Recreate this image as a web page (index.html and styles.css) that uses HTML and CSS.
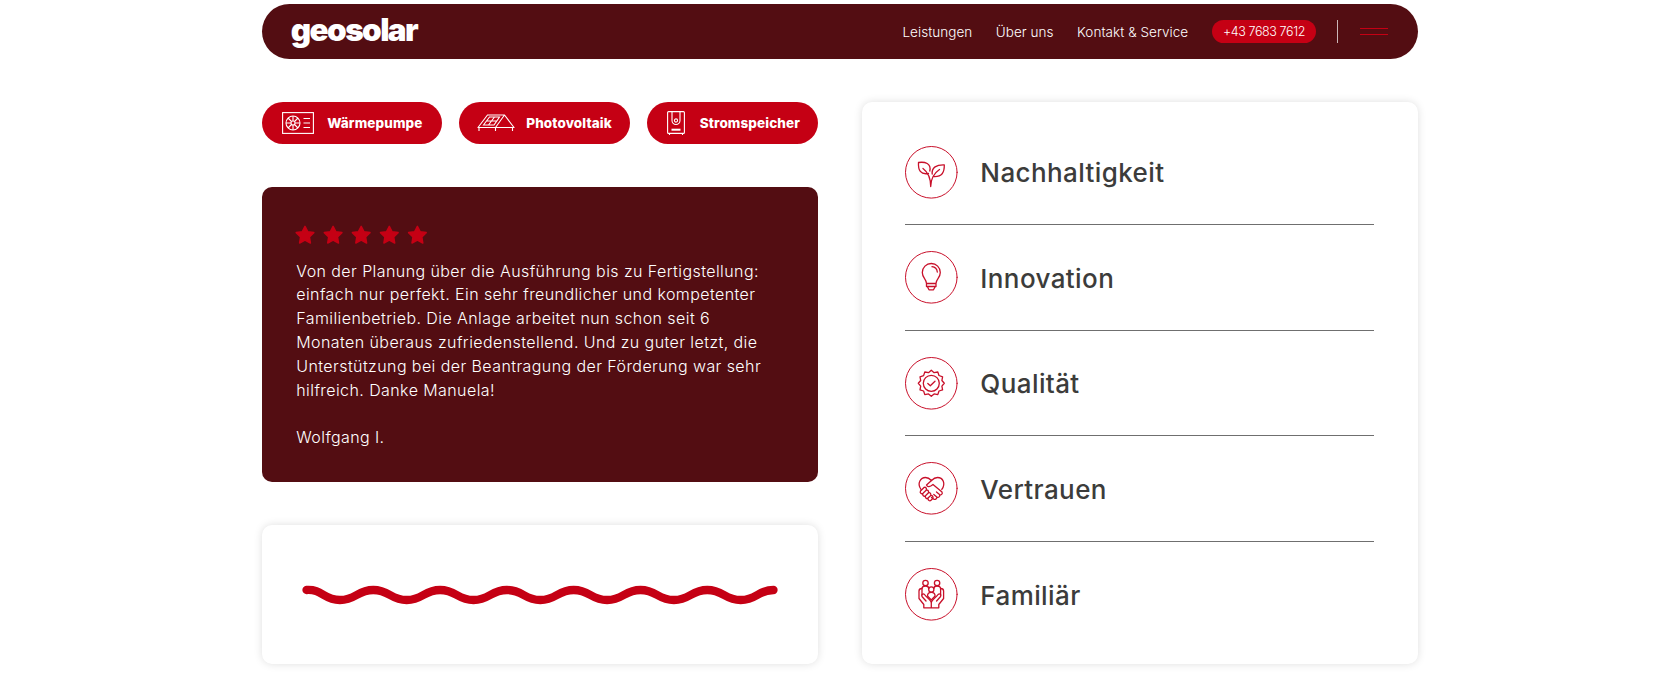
FILE: index.html
```
<!DOCTYPE html>
<html lang="de">
<head>
    <meta charset="UTF-8">
    <meta name="viewport" content="width=device-width, initial-scale=1.0">
    <title>geosolar</title>
    <link rel="stylesheet" href="styles.css">
</head>
<body>
    <div class="page">
    <header class="header">
        <a href="#" class="logo">geosolar</a>
        <nav class="nav">
            <a href="#">Leistungen</a>
            <a href="#">Über uns</a>
            <a href="#">Kontakt &amp; Service</a>
        </nav>
        <a href="#" class="phone">+43 7683 7612</a>
        <span class="divider"></span>
        <div class="burger"><span></span><span></span></div>
    </header>

    <main class="grid">
        <div class="col-left">
            <div class="pills">
                <a href="#" class="pill pill-pumpe">
                    <svg width="32" height="22" viewBox="0 0 32 22">
                        <rect x=".6" y=".6" width="30.8" height="20.8"/>
                        <circle cx="11" cy="11" r="7"/>
                        <circle cx="11" cy="11" r="2"/>
                        <path d="M11 4v5M11 13v5M4 11h5M13 11h5M6 6l3.5 3.5M12.5 12.5L16 16M16 6l-3.5 3.5M9.5 12.5L6 16M21.5 6.5H28M21.5 11H28M21.5 15.5H28"/>
                    </svg>
                    <span>Wärmepumpe</span>
                </a>
                <a href="#" class="pill pill-pv">
                    <svg width="38" height="18" viewBox="0 0 38 18">
                        <path d="M1 13.5L10.5 1H27.5L37 13.5M27.5 1L18.5 13.5M.5 13.5H37.5M2 13.5V17M18.5 13.5V17M35.5 13.5V17"/>
                        <path d="M6.5 11L12.500 3H22.5L17 11ZM9.5 7H19.5M17.5 3L11.5 11"/>
                    </svg>
                    <span>Photovoltaik</span>
                </a>
                <a href="#" class="pill pill-speicher">
                    <svg width="18" height="24" viewBox="0 0 18 24">
                        <rect x=".6" y=".6" width="16.8" height="21.8" rx="1"/>
                        <path d="M5 .6V9.5A4 4 0 0 0 13 9.5V.6M2.5 22.5V24M15.5 22.5V24"/>
                        <circle cx="9" cy="9.5" r="1.6"/>
                        <path d="M4.5 18.7H13.5" stroke-width="2"/>
                    </svg>
                    <span>Stromspeicher</span>
                </a>
            </div>

            <div class="review">
                <svg class="stars" width="134" height="20" viewBox="0 0 134 20">
                    <defs>
                        <path id="star" d="M10 1.3L12.7 6.7L18.8 7.6L14.4 11.9L15.4 18L10 15.1L4.6 18L5.6 11.9L1.2 7.6L7.3 6.7Z"/>
                    </defs>
                    <use href="#star" x="0"/>
                    <use href="#star" x="28.1"/>
                    <use href="#star" x="56.2"/>
                    <use href="#star" x="84.3"/>
                    <use href="#star" x="112.4"/>
                </svg>
                <p>Von der Planung über die Ausführung bis zu Fertigstellung:<br>
                einfach nur perfekt. Ein sehr freundlicher und kompetenter<br>
                Familienbetrieb. Die Anlage arbeitet nun schon seit 6<br>
                Monaten überaus zufriedenstellend. Und zu guter letzt, die<br>
                Unterstützung bei der Beantragung der Förderung war sehr<br>
                hilfreich. Danke Manuela!<br>
                <br>
                Wolfgang I.</p>
            </div>

            <div class="card wave">
                <svg width="476" height="20" viewBox="0 0 476 20">
                    <path d="M4.5 5C20.5 4 21.5 15 37.9 15S55 5 71.3 5S88.4 15 104.7 15S121.8 5 138.1 5S155.2 15 171.5 15S188.6 5 204.9 5S222 15 238.3 15S255.4 5 271.7 5S288.8 15 305.1 15S322.2 5 338.5 5S355.6 15 371.9 15S389 5 405.3 5S422.4 15 438.7 15S455.5 5 471.5 5"/>
                </svg>
            </div>
        </div>

        <ul class="card values">
            <li>
                <svg class="icon" viewBox="0 0 52.6 52.6">
                    <circle class="ring" cx="26.3" cy="26.3" r="25.8"/>
                    <path d="M25.7 40.5C25.7 33 24 27 18 22.5M25.7 40.5C25.8 33 28.5 27.5 34.5 23.5"/>
                    <path d="M23.5 27.5C15.5 29 13 24 13.5 16.5C20 15.5 26.5 17.5 24.8 25"/>
                    <path d="M28.6 30.5C37 31 39.5 26.5 39.3 18.8C31.5 18.5 26.5 21.5 27.2 28"/>
                </svg>
                <span>Nachhaltigkeit</span>
            </li>
            <li>
                <svg class="icon" viewBox="0 0 52.6 52.6">
                    <circle class="ring" cx="26.3" cy="26.3" r="25.8"/>
                    <path d="M21.5 32.5C21.5 28 17.3 27 17.3 21.5A9 9 0 0 1 35.3 21.5C35.3 27 31 28 31 32.5ZM21.5 32.5V35.5H31V32.5M22.3 35.5L24 38.8H28.5L30.3 35.5M27 15.7C30 16 32 18 32.3 21"/>
                </svg>
                <span>Innovation</span>
            </li>
            <li>
                <svg class="icon" viewBox="0 0 52.6 52.6">
                    <circle class="ring" cx="26.3" cy="26.3" r="25.8"/>
                    <path d="M26.3 13.3L29.1 15.7L32.8 15L34 18.5L37.6 19.8L36.9 23.5L39.3 26.3L36.9 29.1L37.6 32.8L34 34L32.8 37.6L29.1 36.9L26.3 39.3L23.5 36.9L19.8 37.6L18.6 34L15 32.8L15.7 29.1L13.3 26.3L15.7 23.5L15 19.8L18.6 18.6L19.8 15L23.5 15.7Z"/>
                    <circle cx="26.3" cy="26.3" r="8"/>
                    <path d="M22.8 26.5L25.3 28.8L30 24.2"/>
                </svg>
                <span>Qualität</span>
            </li>
            <li>
                <svg class="icon" viewBox="0 0 52.6 52.6">
                    <circle class="ring" cx="26.3" cy="26.3" r="25.8"/>
                    <path d="M16 27.5C11.5 21 16 15.5 20.5 15.5C23.5 15.5 25 17 26.5 18.5C28 17 29.5 15.5 32.5 15.5C38 15.5 41 21.5 36.8 27.5"/>
                    <path d="M26.5 18.5L21.5 23C22.5 25.5 25 25 28 22.5L37 30C38 32 36 33.5 34.5 32.5L31.5 30M34.5 32.5C35.5 34.5 33.5 36 31.8 35L28.8 32.5M31.8 35C32 37 30 38 28.5 37L26.5 35.5"/>
                    <path d="M19 25.5L15.5 29C14.5 31 16.5 32.5 18 31.2L21.2 28.2C22 26 20.5 24.8 19 25.5M18 31.2C17 33.5 19 35 20.5 33.7L23.5 30.8C24 29 22.5 27.5 21.2 28.2M20.5 33.7C19.8 36 21.8 37.2 23 36L25.8 33.5C26.2 31.5 24.8 30.2 23.5 30.8M23 36C22.8 38.5 24.8 39.5 26 38.3L28 36.2C28.2 34.5 27 33 25.8 33.5"/>
                </svg>
                <span>Vertrauen</span>
            </li>
            <li>
                <svg class="icon" viewBox="0 0 52.6 52.6">
                    <circle class="ring" cx="26.3" cy="26.3" r="25.8"/>
                    <circle cx="20.5" cy="15" r="2.7"/>
                    <circle cx="32.1" cy="15" r="2.7"/>
                    <circle cx="26.3" cy="21.5" r="2.6"/>
                    <path d="M17 27V21C17 19 18.5 18 20.5 18C22.5 18 23.7 19 23.7 20.5M35.6 27V21C35.6 19 34 18 32 18C30 18 28.9 19 28.9 20.5"/>
                    <path d="M26.3 32L22.5 28C22.5 25.5 24 24.3 26.3 24.3C28.6 24.3 30.1 25.5 30.1 28Z"/>
                    <path d="M17 20.5C15 20.5 14 21.5 14 23V30.5L18.8 36.5V39.8H26.3V35C26.3 32 21.5 29.5 19.5 26.5C18 25 16 26.5 17 28.5L21 33M35.6 20.5C37.6 20.5 38.6 21.5 38.6 23V30.5L33.8 36.5V39.8H26.3V35C26.3 32 31.1 29.5 33.1 26.5C34.6 25 36.6 26.5 35.6 28.5L31.6 33"/>
                </svg>
                <span>Familiär</span>
            </li>
        </ul>
    </main>
    </div>
</body>
</html>
```
FILE: styles.css
```
* {
    box-sizing: border-box;
}

body {
    font-family: Inter, "Open Sans", sans-serif;
    background-color: #ffffff;
    color: #3c3c3b;
    margin: 0;
}

.page {
    width: 1155.5px;
    min-height: 683px;
    margin: 0 auto;
    padding-top: 4px;
}

a {
    color: #ffffff;
    text-decoration: none;
    white-space: nowrap;
}

.header {
    height: 54.5px;
    padding: 0 29.5px;
    background-color: #530d12;
    border-radius: 28px;
    display: flex;
    align-items: center;
}

.logo {
    font-size: 31.5px;
    font-weight: 900;
    line-height: 36px;
    letter-spacing: -1.6px;
    margin: -2px auto 0 -1px;
}

.nav {
    display: flex;
    gap: 23.5px;
    margin-right: 23.5px;
    padding-top: 2px;
    font-size: 13.5px;
    font-weight: 300;
    line-height: 18px;
    letter-spacing: 0.05px;
}

.phone {
    width: 104.5px;
    height: 23px;
    border-radius: 12px;
    background-color: #c50014;
    font-size: 12.5px;
    font-weight: 300;
    line-height: 23px;
    text-align: center;
    letter-spacing: -0.4px;
}

.divider {
    width: 1px;
    height: 23px;
    margin: 0 22px 0 21px;
    background-color: #cbb6b8;
}

.burger {
    width: 28px;
    display: flex;
    flex-direction: column;
    gap: 5px;
}

.burger span {
    height: 1px;
    background-color: #c50014;
}

.grid {
    display: grid;
    grid-template-columns: 555.5px 556px;
    justify-content: space-between;
    margin-top: 43.5px;
    height: 562px;
}

.col-left {
    display: flex;
    flex-direction: column;
    gap: 43.5px;
}

.pills {
    display: flex;
    justify-content: space-between;
}

.pill {
    height: 41.5px;
    border-radius: 21px;
    background-color: #c50014;
    display: flex;
    align-items: center;
    font-size: 13.5px;
    font-weight: 800;
    letter-spacing: 0.1px;
}

.pill svg {
    fill: none;
    stroke: #ffffff;
    stroke-width: 1.1;
}

.pill-pumpe {
    width: 179.5px;
    padding-left: 19.5px;
    gap: 13.5px;
}

.pill-pv {
    width: 171px;
    padding-left: 18.5px;
    gap: 11px;
}

.pill-speicher {
    width: 171px;
    padding-left: 20.5px;
    gap: 14.5px;
}

.review {
    height: 294.5px;
    padding: 37.5px 34px 0;
    border-radius: 10px;
    background-color: #530d12;
    color: #ffffff;
}

.stars {
    display: block;
    margin-left: -1px;
    fill: #c50014;
    stroke: #c50014;
    stroke-width: 1.5;
    stroke-linejoin: round;
}

.review p {
    margin: 15px 0 0;
    font-size: 16px;
    font-weight: 300;
    line-height: 23.85px;
    letter-spacing: 0.42px;
    white-space: nowrap;
}

.card {
    border-radius: 10px;
    background-color: #ffffff;
    box-shadow: 0 0 9px rgba(0, 0, 0, 0.13);
}

.wave {
    flex-grow: 1;
    display: flex;
    align-items: center;
    justify-content: center;
}

.wave svg {
    overflow: visible;
}

.wave path {
    fill: none;
    stroke: #c50014;
    stroke-width: 8.3;
    stroke-linecap: round;
}

.values {
    list-style: none;
    margin: 0;
    padding: 43.5px;
}

.values li {
    display: flex;
    align-items: center;
    gap: 22.5px;
    font-size: 26px;
    font-weight: 500;
    letter-spacing: 0.4px;
}

.values li + li {
    margin-top: 26px;
    padding-top: 26px;
    border-top: 1px solid #6f6f6f;
}

.values span {
    line-height: 30px;
    margin-top: 3px;
}

.icon {
    width: 52.6px;
    height: 52.6px;
    flex-shrink: 0;
    overflow: visible;
    fill: none;
    stroke: #c8102a;
    stroke-width: 1.3;
    stroke-linecap: round;
    stroke-linejoin: round;
}

.icon .ring {
    stroke-width: 1;
}
```
